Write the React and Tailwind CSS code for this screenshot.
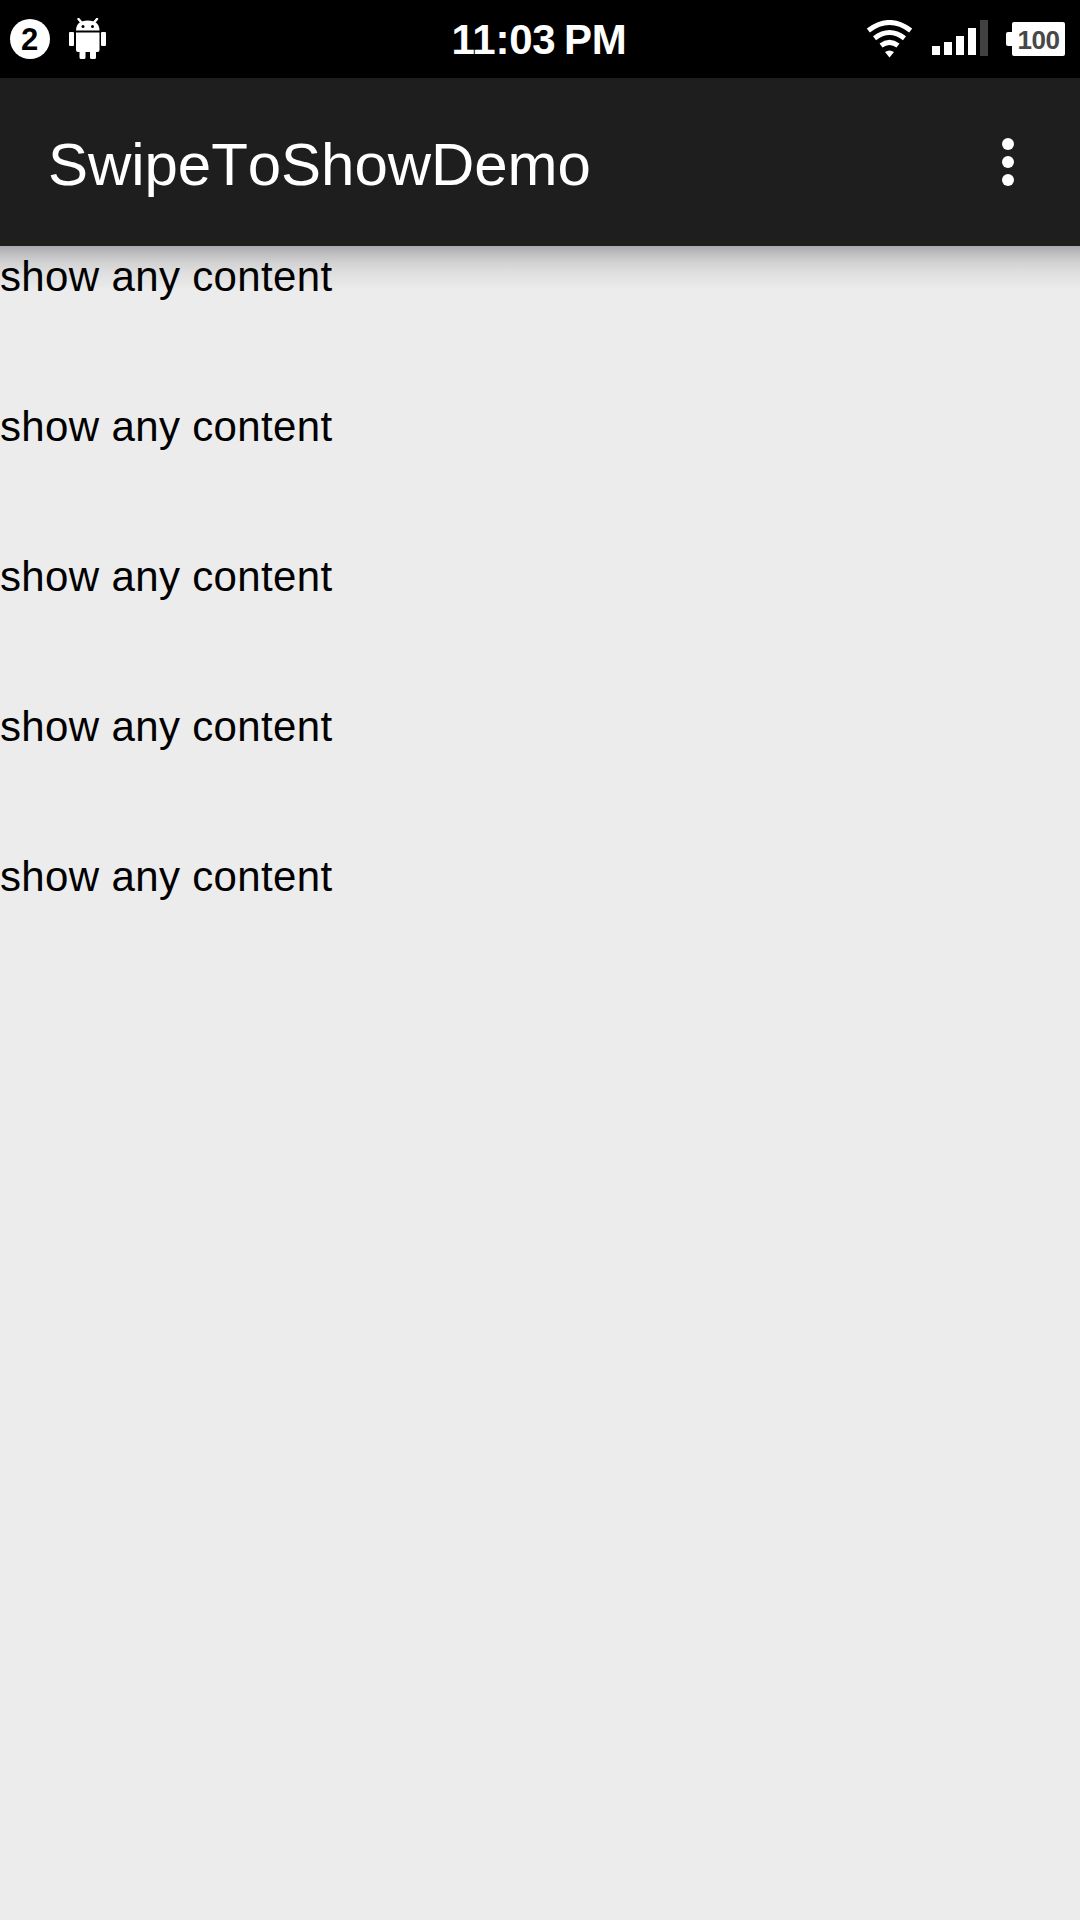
const rows = ["one", "two", "three", "four", "five"];

function NotificationBadge() {
  return (
    <div className="flex h-10 w-10 items-center justify-center rounded-full bg-white pr-px text-[31px] leading-none font-bold text-black">
      2
    </div>
  );
}

function AndroidIcon() {
  return (
    <svg width="38" height="42" viewBox="0 0 38 42" fill="white">
      <path d="M9.500 1 12.500 4.500M28 1 25 4.500" stroke="white" strokeWidth="2.400" strokeLinecap="round" />
      <path d="M7 12.500C7 6 11 2.500 18.700 2.500S30.500 6 30.500 12.500Z" />
      <circle cx="14" cy="8.500" r="1.500" fill="black" />
      <circle cx="23.500" cy="8.500" r="1.500" fill="black" />
      <path d="M7 14.500H30.500V32Q30.500 34 28.500 34H27V39.500Q27 41 25.500 41H22.500Q21 41 21 39.500V34H16.500V39.500Q16.500 41 15 41H12Q10.500 41 10.500 39.500V34H9Q7 34 7 32Z" />
      <rect x="0" y="14" width="5" height="14" rx="1" />
      <rect x="32" y="14" width="5" height="14" rx="1" />
    </svg>
  );
}

function WifiIcon() {
  return (
    <svg width="48" height="38" viewBox="0 0 48 38" fill="none" stroke="white" strokeWidth="5">
      <path d="M2.300 10.500Q23.500-5.500 44.700 10.500" />
      <path d="M8.500 18.200Q23.500 6.700 38.500 18.200" />
      <path d="M15 25.500Q23.500 19.200 32 25.500" />
      <path d="M19 32Q23.500 29 28 32L23.500 37.500Z" fill="white" stroke="none" />
    </svg>
  );
}

function SignalIcon() {
  return (
    <div className="mb-[3px] flex h-[35px] items-end gap-1">
      <div className="h-[9px] w-2 bg-white" />
      <div className="h-[13px] w-2 bg-white" />
      <div className="h-[19px] w-2 bg-white" />
      <div className="h-[27px] w-2 bg-white" />
      <div className="-mb-px h-9 w-2 bg-[#414141]" />
    </div>
  );
}

function BatteryIcon() {
  return (
    <div className="flex items-center">
      <div className="h-[14px] w-[6px] rounded-l-[2px] bg-white" />
      <div className="flex h-[34px] w-[53px] items-center justify-center rounded-[2px] bg-white pt-px text-[26px] leading-none font-bold tracking-[-0.5px] text-[#484848]">
        100
      </div>
    </div>
  );
}

export default function App() {
  return (
    <div className="flex h-[1920px] w-[1080px] flex-col overflow-hidden bg-[#ececec] font-['Liberation_Sans',Arial,sans-serif]">
      <header className="shrink-0">
        <div className="grid h-[78px] grid-cols-[1fr_auto_1fr] items-center bg-black pr-[15px] pl-[10px] text-white">
          <div className="flex items-center gap-[19px]">
            <NotificationBadge />
            <AndroidIcon />
          </div>
          <div className="pt-px pl-[3px] text-[42px] leading-none font-bold tracking-[-0.2px] whitespace-nowrap [word-spacing:-3px]">
            11:03 PM
          </div>
          <div className="flex items-center justify-end">
            <WifiIcon />
            <div className="ml-[18px]"><SignalIcon /></div>
            <div className="ml-[18px]"><BatteryIcon /></div>
          </div>
        </div>
        <div className="flex h-[168px] items-center justify-between bg-[#1e1e1f] pr-[66px] pl-12 text-white">
          <h1 className="pt-[5px] text-[60px] leading-none tracking-[-0.05px] [font-kerning:none]">SwipeToShowDemo</h1>
          <div className="flex flex-col gap-[6px]">
            <span className="h-3 w-3 rounded-full bg-white" />
            <span className="h-3 w-3 rounded-full bg-white" />
            <span className="h-3 w-3 rounded-full bg-white" />
          </div>
        </div>
      </header>
      <main className="flex-1 bg-linear-[180deg,#aaa8ae_0px,#bdbcbf_7px,#d1d1d2_16px,#dededf_26px,#ececec_44px] text-black">
        {rows.map((id) => (
          <div key={id} className="h-[150px] pt-[7px] text-[42px] leading-[48px] tracking-[0.35px]">
            show any content
          </div>
        ))}
      </main>
    </div>
  );
}
